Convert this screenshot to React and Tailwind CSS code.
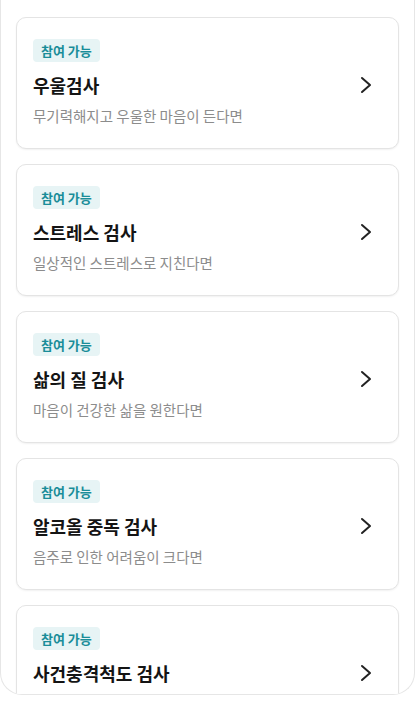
import React from 'react';

const tests = [
    { title: '우울검사', desc: '무기력해지고 우울한 마음이 든다면' },
    { title: '스트레스 검사', desc: '일상적인 스트레스로 지친다면' },
    { title: '삶의 질 검사', desc: '마음이 건강한 삶을 원한다면' },
    { title: '알코올 중독 검사', desc: '음주로 인한 어려움이 크다면' },
    { title: '사건충격척도 검사', desc: '충격적인 사건을 겪었다면' },
];

const Chevron = () => (
    <svg width="14" height="18" viewBox="0 0 14 18" fill="none">
        <polyline points="3,2 11,9 3,16" stroke="#222" strokeWidth="2" strokeLinecap="round" strokeLinejoin="round" />
    </svg>
);

const TestCard = ({ title, desc }) => (
    <div className="shrink-0 h-[132px] bg-white border border-[#e4e4e4] rounded-[10px] shadow-[0_1px_2px_rgba(0,0,0,0.06)] pl-[16px] pr-[25px] pt-[21px] flex items-start">
        <div className="flex-1 flex flex-col items-start">
            <span className="h-[23px] px-[8px] rounded-[4px] bg-[#e7f4f5] text-[#1a8d99] text-[13px] font-bold leading-[23px]">
                참여 가능
            </span>
            <div className="mt-[11px] text-[18px] font-bold leading-[24px] text-[#141414]">{title}</div>
            <div className="mt-[9px] text-[14.5px] leading-[20px] text-[#8c8c8c]">{desc}</div>
        </div>
        <div className="mt-[37px]">
            <Chevron />
        </div>
    </div>
);

export default function App() {
    return (
        <div className="w-[415px] h-[701px] bg-white" style={{ fontFamily: '"Noto Sans CJK KR", "Noto Sans", sans-serif' }}>
            <div className="h-[695px] border-x border-b border-[#e6e6e6] rounded-b-[22px] overflow-hidden">
                <div className="px-[15px] pt-[17px] flex flex-col gap-[15px]">
                    {tests.map((t) => (
                        <TestCard key={t.title} {...t} />
                    ))}
                </div>
            </div>
        </div>
    );
}
